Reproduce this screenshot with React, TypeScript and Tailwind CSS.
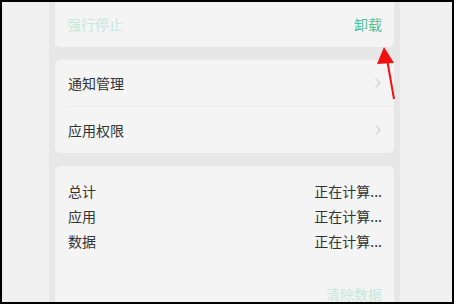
import React from "react";

const font = { fontFamily: '"Noto Sans CJK SC", "Noto Sans", sans-serif' };

function Chevron() {
  return (
    <svg width="8" height="12" viewBox="0 0 8 12" className="mr-[12px]">
      <path d="M1.5 1.5 L6 6 L1.5 10.5" fill="none" stroke="#d2d2d2" strokeWidth="1.2" />
    </svg>
  );
}

function StatRow({ label }: { label: string }) {
  return (
    <div className="flex items-center justify-between leading-[25px]">
      <span>{label}</span>
      <span>正在计算...</span>
    </div>
  );
}

export default function App() {
  return (
    <div
      className="relative w-[454px] h-[304px] overflow-hidden border-2 border-black bg-[#f0f0f0] text-[14px] text-[#333]"
      style={font}
    >
      <div className="flex h-full">
        <div className="w-[47px] shrink-0" />
        <div className="flex w-[351px] shrink-0 flex-col gap-[13px] bg-[#e7e7e7] px-[6px]">
          <div className="flex h-[45px] shrink-0 items-center justify-between rounded-b-md bg-[#f4f4f4] pl-[12px] pr-[12px]">
            <span className="text-[#c6e8dc]">强行停止</span>
            <span className="text-[#4cbf9d]">卸载</span>
          </div>

          <div className="shrink-0 rounded-md bg-[#f4f4f4]">
            <div className="flex h-[46px] items-center justify-between pl-[13px]">
              <span>通知管理</span>
              <Chevron />
            </div>
            <div className="ml-[13px] h-px bg-[#e8e8e8]" />
            <div className="flex h-[46px] items-center justify-between pl-[13px]">
              <span>应用权限</span>
              <Chevron />
            </div>
          </div>

          <div className="flex-1 rounded-t-md bg-[#f4f4f4] pl-[13px] pr-[12px] pt-[13px]">
            <StatRow label="总计" />
            <StatRow label="应用" />
            <StatRow label="数据" />
            <div className="mt-[8px] h-px bg-[#f1f1f1]" />
            <div className="mt-[19px] text-right leading-[25px] text-[#c6e8dc]">清除数据</div>
          </div>
        </div>
        <div className="flex-1" />
      </div>

      <svg className="absolute left-[371px] top-[41px]" width="28" height="62" viewBox="0 0 28 62">
        <line x1="21" y1="56" x2="14" y2="16" stroke="#f01010" strokeWidth="2" />
        <polygon points="11,4 4,21 21,20" fill="#f01010" />
      </svg>
    </div>
  );
}
